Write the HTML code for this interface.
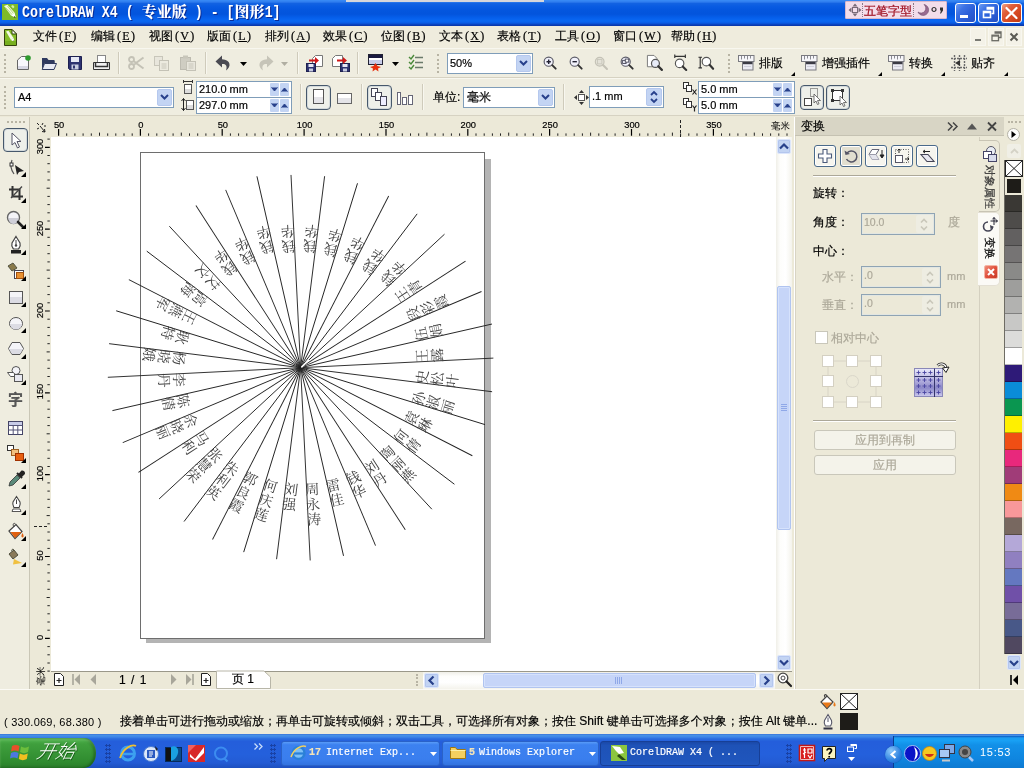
<!DOCTYPE html>
<html lang="zh-CN"><head><meta charset="utf-8"><title>CorelDRAW X4 ( 专业版 ) - [图形1]</title>
<style>
*{box-sizing:border-box;margin:0;padding:0}
html,body{width:1024px;height:768px;overflow:hidden;background:#ECE9D8}
body{font-family:"Liberation Sans","WenQuanYi Zen Hei","Noto Sans CJK SC",sans-serif;font-size:12px;color:#000;line-height:1;-webkit-text-stroke:0.18px currentColor}
#root{position:absolute;left:0;top:0;width:1024px;height:768px;overflow:hidden;background:#ECE9D8}
.a{position:absolute}
.t{position:absolute;white-space:nowrap;line-height:1}
u{text-decoration:underline}
svg{position:absolute;overflow:visible}
#titletext .lat{font-size:13.3px;letter-spacing:0;display:inline-block;white-space:pre;transform:scaleY(1.28);transform-origin:50% 78%;position:relative;top:2px}
#titletext .cj{font-size:15px;font-weight:900;position:relative;top:2px}
.mi{font-size:12px;font-family:"Liberation Serif","WenQuanYi Zen Hei","Noto Sans CJK SC",serif;letter-spacing:0}
.mi .mk{font-size:12px;letter-spacing:1.3px;margin-left:2px}
.grip{width:3px;border-left:2px dotted #B8B4A4}
.vsep{width:2px;border-left:1px solid #CFCBBB;border-right:1px solid #F8F7EF}
.combo{background:#fff;border:1px solid #7F9DB9}
.cbtn{background:#C3D4F3;border:1px solid #B5C8EE;border-radius:2px}
.tb{font-size:12px}
.sbtn{width:9px;height:13px;background:#C3D4F3;border-radius:1px}
.selb{border:1px solid #46586C;border-radius:4px;background:#EEF0EA;box-shadow:inset 0 0 0 1px #D4DADC}
.rl{font-size:9.3px;letter-spacing:0}
.scb{background:#C3D4F3;border:1px solid #DCE6FB;border-radius:2px;box-shadow:0 0 0 1px #B4C6EE inset}
.sct{background:#C6D5F8;border:1px solid #B0C4F0;border-radius:2px;box-shadow:inset 0 0 0 1px #D6E2FC}
#fan text{stroke:none;fill:#444;-webkit-text-stroke:0}
.dl{font-size:12px}
.vt{writing-mode:vertical-rl;text-orientation:sideways;letter-spacing:0}
.st{font-size:12px}
.st.num{font-size:11px}
.tk{font-size:12px;color:#fff;font-family:"Liberation Mono","Noto Sans CJK SC",monospace;font-size:10px;letter-spacing:0}
#fan{filter:grayscale(1)}
#root{filter:brightness(1)}

</style></head><body>
<div id="root">
<!-- sec_title -->
<div class="a" id="titlebar" style="left:0;top:0;width:1024px;height:26px;background:linear-gradient(to bottom,#3A8CF6 0px,#2E7CEE 2px,#1262E2 3.5px,#0A5CE2 6px,#0456DE 10px,#0354DC 14px,#0660EC 18px,#0A68F2 21px,#0A5CE4 23px,#0A44C0 24.5px,#0A34A4 26px)"></div>
<div class="a" style="left:346px;top:0;width:198px;height:2px;background:#D6D6DA"></div>
<svg style="left:2px;top:4px" width="16" height="16" viewBox="0 0 16 16"><rect x="0" y="0" width="16" height="16" fill="#7FBA2A"/><path d="M2 2 L5.500 0.800 L12.500 8.500 L9 11.500 Z" fill="#F4FAE4"/><path d="M3.500 3.500 L10 10.500 M5.500 2 L11.500 9.500" stroke="#A8D060" stroke-width="0.800"/><path d="M12.500 8.500 L9 11.500 L14 14Z" fill="#FFFFFF"/><path d="M12.300 12 L14.200 14.200 L11.800 13.200Z" fill="#1A2A08"/><path d="M9 2 l2 -1 l1.500 2 l-1.500 1.500z" fill="#D8F0A8"/></svg>
<div class="t" id="titletext" style="left:22px;top:4px;font-family:'Liberation Mono','Noto Serif CJK SC',monospace;font-weight:bold;font-size:15px;color:#fff;letter-spacing:0;text-shadow:1px 1px 0 #0A2C96;-webkit-text-stroke:0"><span class="lat">CorelDRAW X4 ( </span><span class="cj">专业版</span><span class="lat"> ) - [</span><span class="cj">图形</span><span class="lat">1]</span></div>
<div class="a" style="left:845px;top:1px;width:102px;height:18px;background:#F3DDEA;border:1px solid #D8B8CC;border-radius:1px"></div>
<svg style="left:848px;top:3px" width="14" height="14" viewBox="0 0 14 14"><path d="M7 0.5 L9.5 3.5 L4.5 3.5Z M7 13.5 L9.5 10.5 L4.5 10.5Z M0.5 7 L3.5 4.5 L3.5 9.5Z M13.5 7 L10.5 4.5 L10.5 9.5Z" fill="#7A6A78"/><rect x="4.5" y="4.5" width="5" height="5" fill="none" stroke="#7A6A78" stroke-width="1"/></svg>
<div class="a" style="left:862px;top:3px;width:1px;height:14px;border-left:1px dotted #8A7A88"></div>
<div class="t" style="left:864px;top:5px;font-size:12px;color:#A01020;letter-spacing:0;-webkit-text-stroke:0.25px #A01020">五笔字型</div>
<div class="a" style="left:913px;top:3px;width:1px;height:14px;border-left:1px dotted #8A7A88"></div>
<svg style="left:917px;top:4px" width="12" height="12" viewBox="0 0 12 12"><path d="M7 0.5 A5.5 5.5 0 1 1 1 8 A4.5 4.5 0 0 0 7 0.5Z" fill="#9A6A90" stroke="#6A4A68" stroke-width="0.6"/></svg>
<svg style="left:931px;top:6px" width="14" height="9" viewBox="0 0 14 9"><circle cx="3" cy="3.5" r="2" fill="none" stroke="#333" stroke-width="1.2"/><path d="M9 1.5 h3 v3 l-2 3 h-1 l1 -3 h-1z" fill="#333"/></svg>
<div class="a" style="left:955px;top:3px;width:21px;height:20px;border:1px solid #fff;border-radius:3px;background:linear-gradient(135deg,#6C9CF4 0%,#3C72E4 30%,#2B5FD8 60%,#2450C4 100%)"></div>
<div class="a" style="left:978px;top:3px;width:21px;height:20px;border:1px solid #fff;border-radius:3px;background:linear-gradient(135deg,#6C9CF4 0%,#3C72E4 30%,#2B5FD8 60%,#2450C4 100%)"></div>
<div class="a" style="left:1001px;top:3px;width:21px;height:20px;border:1px solid #fff;border-radius:3px;background:linear-gradient(135deg,#F0A488 0%,#E0603C 30%,#D84A22 60%,#C03A14 100%)"></div>
<div class="a" style="left:960px;top:15px;width:8px;height:3px;background:#fff"></div>
<svg style="left:982px;top:6px" width="13" height="13" viewBox="0 0 13 13"><path d="M4.5 1.5 h7 v6 h-2 M4.5 3 h7" fill="none" stroke="#fff" stroke-width="1.6"/><rect x="1.5" y="5.5" width="7" height="6" fill="none" stroke="#fff" stroke-width="1.6"/><path d="M1.5 6.5 h7" stroke="#fff" stroke-width="1.6"/></svg>
<svg style="left:1005px;top:7px" width="13" height="12" viewBox="0 0 13 12"><path d="M1.5 1 L11.5 11 M11.5 1 L1.5 11" stroke="#fff" stroke-width="2.2" stroke-linecap="round"/></svg>

<!-- sec_menu -->
<div class="a" id="menubar" style="left:0;top:26px;width:1024px;height:22px;background:#EFECDD"></div>
<svg style="left:4px;top:29px" width="13" height="17" viewBox="0 0 13 17"><path d="M0.500 0.500 H8 L12.500 5 V16.500 H0.500Z" fill="#86BE2A" stroke="#34440E" stroke-width="1"/><path d="M8 0.500 V5 H12.500Z" fill="#fff" stroke="#34440E" stroke-width="1"/><path d="M2 2.500 L4.500 1.800 L9.500 9 L7 11Z" fill="#F4FAE4"/><path d="M9.500 9 L7 11 L10.500 13Z" fill="#fff"/><path d="M9.300 11.300 L10.800 13.200 L8.800 12.500Z" fill="#1A2A08"/><path d="M1 12 h11 v4 h-11z" fill="#78B020"/></svg>
<div class="t mi" style="left:33px;top:30px">文件<span class="mk">(<u>F</u>)</span></div>
<div class="t mi" style="left:91px;top:30px">编辑<span class="mk">(<u>E</u>)</span></div>
<div class="t mi" style="left:149px;top:30px">视图<span class="mk">(<u>V</u>)</span></div>
<div class="t mi" style="left:207px;top:30px">版面<span class="mk">(<u>L</u>)</span></div>
<div class="t mi" style="left:265px;top:30px">排列<span class="mk">(<u>A</u>)</span></div>
<div class="t mi" style="left:323px;top:30px">效果<span class="mk">(<u>C</u>)</span></div>
<div class="t mi" style="left:381px;top:30px">位图<span class="mk">(<u>B</u>)</span></div>
<div class="t mi" style="left:439px;top:30px">文本<span class="mk">(<u>X</u>)</span></div>
<div class="t mi" style="left:497px;top:30px">表格<span class="mk">(<u>T</u>)</span></div>
<div class="t mi" style="left:555px;top:30px">工具<span class="mk">(<u>O</u>)</span></div>
<div class="t mi" style="left:613px;top:30px">窗口<span class="mk">(<u>W</u>)</span></div>
<div class="t mi" style="left:671px;top:30px">帮助<span class="mk">(<u>H</u>)</span></div>
<div class="a" style="left:970px;top:28px;width:16px;height:18px;background:#F4F2E8;border:1px solid #F8F7F0"></div>
<div class="a" style="left:988px;top:28px;width:16px;height:18px;background:#F4F2E8;border:1px solid #F8F7F0"></div>
<div class="a" style="left:1006px;top:28px;width:16px;height:18px;background:#F4F2E8;border:1px solid #F8F7F0"></div>
<div class="a" style="left:975px;top:39px;width:6px;height:2px;background:#7A7A74"></div>
<svg style="left:991px;top:31px" width="11" height="11" viewBox="0 0 11 11"><path d="M3.5 1 h6.5 v5.5 h-2 M3.5 2 h6.5" fill="none" stroke="#6A6A64" stroke-width="1.3"/><rect x="1" y="4.2" width="6.5" height="5.5" fill="none" stroke="#6A6A64" stroke-width="1.3"/><path d="M1 5 h6.5" stroke="#6A6A64" stroke-width="1.3"/></svg>
<svg style="left:1009px;top:32px" width="10" height="10" viewBox="0 0 10 10"><path d="M1.5 1.5 L8.5 8.5 M8.5 1.5 L1.5 8.5" stroke="#5A5A54" stroke-width="2"/></svg>

<!-- sec_toolbar -->
<div class="a" style="left:0;top:48px;width:1024px;height:30px;background:#EFEDE0;border-top:1px solid #F8F7EF;border-bottom:1px solid #D6D2C2"></div>
<div class="a grip" style="left:4px;top:54px;height:19px"></div>
<svg style="left:16px;top:55px" width="15" height="16" viewBox="0 0 15 16"><path d="M1.5 5 L5.5 1.5 H12.5 V14.5 H1.5Z" fill="#F8F8FC" stroke="#666"/><path d="M2 11 h10 v3 h-10z" fill="#D8D8E4"/><circle cx="12" cy="3" r="2.8" fill="#2E9A2E"/></svg>
<svg style="left:41px;top:55px" width="16" height="16" viewBox="0 0 16 16"><path d="M1 3 h5 l1.5 2 h6 v3 h-12.5z" fill="#2F3A5F"/><path d="M1 14.5 V6 h12.5 v2 H4Z" fill="#2F3A5F"/><path d="M3.5 8.5 H15.5 L13 14.5 H1.2Z" fill="#E8EAF4" stroke="#2F3A5F"/></svg>
<svg style="left:68px;top:56px" width="14" height="14" viewBox="0 0 14 14"><path d="M0.5 0.5 h13 v13 h-12 l-1 -1z" fill="#2D3270" stroke="#1D2050"/><rect x="3" y="1" width="8" height="5" fill="#E6E8F4"/><rect x="3.5" y="8.5" width="7" height="5" fill="#C8CCE0"/><rect x="5" y="9.5" width="2" height="3" fill="#2D3270"/></svg>
<svg style="left:93px;top:55px" width="17" height="16" viewBox="0 0 17 16"><rect x="4.5" y="0.5" width="8" height="8" fill="#fff" stroke="#888"/><path d="M0.5 7.5 h16 v7 h-16z" fill="#F0F0F0" stroke="#333"/><path d="M2.5 7.5 v4 h12 v-4" fill="none" stroke="#333" stroke-width="1.5"/></svg>
<div class="a vsep" style="left:118px;top:52px;height:22px"></div>
<svg style="left:128px;top:56px" width="17" height="14" viewBox="0 0 17 14"><path d="M8 7 L15.5 1.5 M8 7 L15.5 12.5" stroke="#C4C2B6" stroke-width="2"/><circle cx="3.5" cy="3.5" r="2.5" fill="none" stroke="#C4C2B6" stroke-width="1.8"/><circle cx="3.5" cy="10.5" r="2.5" fill="none" stroke="#C4C2B6" stroke-width="1.8"/><path d="M5.5 5 L9 7.5 M5.5 9 L9 6.5" stroke="#C4C2B6" stroke-width="1.8"/></svg>
<svg style="left:154px;top:56px" width="15" height="15" viewBox="0 0 15 15"><rect x="0.5" y="0.5" width="8" height="9" fill="#E8E6DC" stroke="#C8C6BA"/><rect x="5.5" y="4.5" width="9" height="10" fill="#ECEADF" stroke="#C4C2B6"/><path d="M7.5 8 h5 M7.5 10 h5 M7.5 12 h5" stroke="#C8C6BA"/></svg>
<svg style="left:180px;top:55px" width="16" height="16" viewBox="0 0 16 16"><rect x="0.5" y="2.5" width="10" height="12" fill="#CFCDC2" stroke="#BDBBB0"/><rect x="3" y="0.5" width="5" height="3" fill="#C8C6BA"/><rect x="6.5" y="6.5" width="9" height="9" fill="#E8E6DC" stroke="#C4C2B6"/><path d="M8.5 9 h5 M8.5 11 h5 M8.5 13 h5" stroke="#C8C6BA"/></svg>
<div class="a vsep" style="left:205px;top:52px;height:22px"></div>
<svg style="left:215px;top:55px" width="18" height="17" viewBox="0 0 18 17"><path d="M7 0.5 L0.5 6.5 L7 12.5 V9 C11 8.5 12.5 11 11 15.5 C16.5 12 16 4.5 7 4.2Z" fill="#4A4A52"/></svg>
<svg style="left:240px;top:62px" width="7" height="4" viewBox="0 0 7 4"><path d="M0 0 h7 l-3.5 4z" fill="#000"/></svg>
<svg style="left:256px;top:55px" width="18" height="17" viewBox="0 0 18 17"><path d="M11 0.5 L17.5 6.5 L11 12.5 V9 C7 8.5 5.5 11 7 15.5 C1.5 12 2 4.5 11 4.2Z" fill="#C6C4B8"/></svg>
<svg style="left:281px;top:62px" width="7" height="4" viewBox="0 0 7 4"><path d="M0 0 h7 l-3.5 4z" fill="#B0AEA2"/></svg>
<div class="a vsep" style="left:297px;top:52px;height:22px"></div>
<svg style="left:306px;top:55px" width="18" height="17" viewBox="0 0 18 17"><path d="M9.5 0.5 h7 v11 h-10 v-8z" fill="#fff" stroke="#777"/><rect x="0.5" y="8.5" width="9" height="8" fill="#2D3270" stroke="#1D2050"/><rect x="2.5" y="9" width="5" height="3" fill="#E6E8F4"/><rect x="3" y="13.5" width="4" height="3" fill="#C8CCE0"/><path d="M3 4.5 h6 v-2.5 l4 3.5 l-4 3.5 v-2.500 h-6z" fill="#D01818"/></svg>
<svg style="left:332px;top:55px" width="18" height="17" viewBox="0 0 18 17"><path d="M3.500 0.500 h7 v11 h-10 v-8z" fill="#fff" stroke="#777"/><rect x="8.500" y="8.500" width="9" height="8" fill="#2D3270" stroke="#1D2050"/><rect x="10.500" y="9" width="5" height="3" fill="#E6E8F4"/><rect x="11" y="13.500" width="4" height="3" fill="#C8CCE0"/><path d="M5 4.500 h6 v-2.500 l4 3.500 l-4 3.500 v-2.500 h-6z" fill="#D01818"/></svg>
<div class="a vsep" style="left:357px;top:52px;height:22px"></div>
<svg style="left:368px;top:54px" width="15" height="18" viewBox="0 0 15 18"><rect x="0.5" y="0.5" width="14" height="10" fill="#fff" stroke="#223"/><rect x="1" y="1" width="13" height="3" fill="#1A1A40"/><rect x="1" y="6" width="13" height="4" fill="#C8CCE8"/><path d="M7.5 9 l2 3 l3.500 1 l-3 1.500 l0.500 3 l-3 -2 l-3 2 l0.500 -3 l-3 -1.500 l3.500 -1z" fill="#E83010"/></svg>
<svg style="left:392px;top:62px" width="7" height="4" viewBox="0 0 7 4"><path d="M0 0 h7 l-3.5 4z" fill="#000"/></svg>
<svg style="left:408px;top:54px" width="16" height="18" viewBox="0 0 16 18"><path d="M7 3.5 h8 M7 8.500 h8 M7 13.500 h8" stroke="#6A7A6A" stroke-width="1.4"/><path d="M1 3 l2 2 l3 -4 M1 8 l2 2 l3 -4 M1 13 l2 2 l3 -4" fill="none" stroke="#4A8A3A" stroke-width="1.4"/></svg>
<div class="a grip" style="left:437px;top:54px;height:19px"></div>
<div class="a combo" style="left:447px;top:53px;width:86px;height:21px"></div>
<div class="a cbtn" style="left:516px;top:55px;width:15px;height:17px"></div>
<svg style="left:519px;top:60px" width="9" height="6" viewBox="0 0 9 6"><path d="M1 1 L4.5 4.5 L8 1" fill="none" stroke="#27408B" stroke-width="2"/></svg>
<div class="t" style="left:450px;top:58px;font-size:11px">50%</div>
<svg style="left:543px;top:56px" width="14" height="14" viewBox="0 0 16 16"><circle cx="6.5" cy="6.5" r="5.2" fill="#F0F0FA" stroke="#5A5A66" stroke-width="1.3"/><path d="M10.500 10.500 L14.500 14.500" stroke="#333" stroke-width="2.200" stroke-linecap="round"/><path d="M4 6.500 h5 M6.500 4 v5" stroke="#223" stroke-width="1.6"/></svg>
<svg style="left:569px;top:56px" width="14" height="14" viewBox="0 0 16 16"><circle cx="6.5" cy="6.5" r="5.2" fill="#F0F0FA" stroke="#5A5A66" stroke-width="1.3"/><path d="M10.500 10.500 L14.500 14.500" stroke="#333" stroke-width="2.200" stroke-linecap="round"/><path d="M4 6.500 h5" stroke="#223" stroke-width="1.6"/></svg>
<svg style="left:594px;top:56px" width="14" height="14" viewBox="0 0 16 16"><circle cx="6.500" cy="6.500" r="5" fill="#E4E2D8" stroke="#C4C2B6" stroke-width="1.300"/><path d="M10.300 10.300 L14.800 14.800" stroke="#C4C2B6" stroke-width="2.400" stroke-linecap="round"/><rect x="4" y="4" width="5" height="5" fill="none" stroke="#C8C6BA"/></svg>
<svg style="left:620px;top:56px" width="14" height="14" viewBox="0 0 16 16"><circle cx="6.5" cy="6.5" r="5.2" fill="#F0F0FA" stroke="#5A5A66" stroke-width="1.3"/><path d="M10.500 10.500 L14.500 14.500" stroke="#333" stroke-width="2.200" stroke-linecap="round"/><rect x="3" y="5" width="4" height="3.500" fill="none" stroke="#445"/><rect x="6" y="3.500" width="4" height="3.500" fill="#fff" stroke="#445"/></svg>
<svg style="left:646px;top:54px" width="17" height="17" viewBox="0 0 18 18"><path d="M1.500 1.500 h7 l3 3 v9 h-10z" fill="#fff" stroke="#777"/><circle cx="10" cy="10" r="4.200" fill="#E8ECF8" stroke="#555" stroke-width="1.300"/><path d="M13 13 L16.800 16.800" stroke="#333" stroke-width="2.400" stroke-linecap="round"/></svg>
<svg style="left:673px;top:54px" width="15" height="17" viewBox="0 0 17 19"><path d="M2 0.500 v4 M14 0.500 v4 M2 2.500 h12" stroke="#333" stroke-width="1.300"/><circle cx="7.500" cy="10.500" r="4.800" fill="#fff" stroke="#555" stroke-width="1.300"/><path d="M11 14 L15 18" stroke="#333" stroke-width="2.400" stroke-linecap="round"/></svg>
<svg style="left:698px;top:55px" width="16" height="16" viewBox="0 0 18 18"><path d="M0.500 2.500 h4 M0.500 14.500 h4 M2.500 2.500 v12" stroke="#333" stroke-width="1.300"/><circle cx="9.500" cy="7.500" r="4.800" fill="#fff" stroke="#555" stroke-width="1.300"/><path d="M13 11 L17 15.500" stroke="#333" stroke-width="2.400" stroke-linecap="round"/></svg>
<div class="a grip" style="left:728px;top:54px;height:19px"></div>
<svg style="left:738px;top:55px" width="17" height="16" viewBox="0 0 17 16"><rect x="0.5" y="0.5" width="15.5" height="6" fill="#F6F6FA" stroke="#7A7A80"/><path d="M3.500 1 v3.500 M6.500 1 v2.500 M9.500 1 v3.500 M12.500 1 v2.500" stroke="#8A8A92"/><rect x="4.500" y="6.500" width="10.500" height="8.500" fill="#ECECF4" stroke="#7A7A80"/><rect x="5" y="7" width="9.500" height="2.200" fill="#3A3A44"/><path d="M6 11.500 h7" stroke="#D0D0DC"/></svg>
<div class="t tb" style="left:759px;top:57px">排版</div>
<svg style="left:791px;top:72px" width="4" height="4" viewBox="0 0 4 4"><path d="M4 0 v4 h-4z" fill="#000"/></svg>
<svg style="left:801px;top:55px" width="17" height="16" viewBox="0 0 17 16"><rect x="0.5" y="0.5" width="15.5" height="6" fill="#F6F6FA" stroke="#7A7A80"/><path d="M3.500 1 v3.500 M6.500 1 v2.500 M9.500 1 v3.500 M12.500 1 v2.500" stroke="#8A8A92"/><rect x="4.500" y="6.500" width="10.500" height="8.500" fill="#ECECF4" stroke="#7A7A80"/><rect x="5" y="7" width="9.500" height="2.200" fill="#3A3A44"/><path d="M6 11.500 h7" stroke="#D0D0DC"/></svg>
<div class="t tb" style="left:822px;top:57px">增强插件</div>
<svg style="left:878px;top:72px" width="4" height="4" viewBox="0 0 4 4"><path d="M4 0 v4 h-4z" fill="#000"/></svg>
<svg style="left:888px;top:55px" width="17" height="16" viewBox="0 0 17 16"><rect x="0.5" y="0.5" width="15.5" height="6" fill="#F6F6FA" stroke="#7A7A80"/><path d="M3.500 1 v3.500 M6.500 1 v2.500 M9.500 1 v3.500 M12.500 1 v2.500" stroke="#8A8A92"/><rect x="4.500" y="6.500" width="10.500" height="8.500" fill="#ECECF4" stroke="#7A7A80"/><rect x="5" y="7" width="9.500" height="2.200" fill="#3A3A44"/><path d="M6 11.500 h7" stroke="#D0D0DC"/></svg>
<div class="t tb" style="left:909px;top:57px">转换</div>
<svg style="left:941px;top:72px" width="4" height="4" viewBox="0 0 4 4"><path d="M4 0 v4 h-4z" fill="#000"/></svg>
<svg style="left:951px;top:55px" width="16" height="16" viewBox="0 0 16 16"><path d="M3.500 0 v16 M8.500 0 v16 M13.500 0 v16 M0 3.500 h16 M0 12.500 h16" stroke="#6A6A6A" stroke-width="1.400" stroke-dasharray="2 1"/><path d="M4 8 l5 -3 v6z" fill="#333"/></svg>
<div class="t tb" style="left:971px;top:57px">贴齐</div>
<svg style="left:1004px;top:72px" width="4" height="4" viewBox="0 0 4 4"><path d="M4 0 v4 h-4z" fill="#000"/></svg>

<!-- sec_propbar -->
<div class="a" style="left:0;top:78px;width:1024px;height:38px;background:#EFEDE0;border-top:1px solid #F8F7EF;border-bottom:1px solid #D6D2C2"></div>
<div class="a grip" style="left:4px;top:86px;height:23px"></div>
<div class="a combo" style="left:14px;top:87px;width:160px;height:21px"></div>
<div class="a cbtn" style="left:157px;top:89px;width:15px;height:17px"></div>
<svg style="left:160px;top:94px" width="9" height="6" viewBox="0 0 9 6"><path d="M1 1 L4.5 4.5 L8 1" fill="none" stroke="#27408B" stroke-width="2"/></svg>
<div class="t" style="left:18px;top:92px;font-size:11px">A4</div>
<svg style="left:183px;top:80px" width="10" height="15" viewBox="0 0 10 15"><path d="M0.500 1.500 h9 M0.500 0 v3 M9.500 0 v3" stroke="#333"/><rect x="1.500" y="4.500" width="7" height="9" fill="#fff" stroke="#555"/><rect x="2" y="9" width="6" height="4" fill="#DDD"/></svg>
<svg style="left:181px;top:98px" width="13" height="14" viewBox="0 0 13 14"><path d="M2.500 0.500 v12 M0.500 3 l2 -2.500 l2 2.500 M0.500 10 l2 2.500 l2 -2.500" fill="none" stroke="#222"/><rect x="5.500" y="2.500" width="7" height="9" fill="#fff" stroke="#555"/><rect x="6" y="7" width="6" height="4" fill="#DDD"/></svg>
<div class="a combo" style="left:196px;top:81px;width:96px;height:17px"></div>
<div class="t" style="left:199px;top:84px;font-size:11px">210.0 mm</div>
<div class="a sbtn" style="left:270px;top:83px"></div><div class="a sbtn" style="left:280px;top:83px"></div>
<svg style="left:271px;top:87px" width="7" height="5" viewBox="0 0 7 5"><path d="M0.5 0.5 L3.5 4 L6.5 0.5" fill="#27408B" stroke="#27408B" stroke-width="1"/></svg>
<svg style="left:281px;top:87px" width="7" height="5" viewBox="0 0 7 5"><path d="M0.5 4.500 L3.500 1 L6.500 4.500" fill="#27408B" stroke="#27408B" stroke-width="1"/></svg>
<div class="a combo" style="left:196px;top:97px;width:96px;height:17px"></div>
<div class="t" style="left:199px;top:100px;font-size:11px">297.0 mm</div>
<div class="a sbtn" style="left:270px;top:99px"></div><div class="a sbtn" style="left:280px;top:99px"></div>
<svg style="left:271px;top:103px" width="7" height="5" viewBox="0 0 7 5"><path d="M0.5 0.5 L3.5 4 L6.5 0.5" fill="#27408B" stroke="#27408B" stroke-width="1"/></svg>
<svg style="left:281px;top:103px" width="7" height="5" viewBox="0 0 7 5"><path d="M0.5 4.500 L3.500 1 L6.500 4.500" fill="#27408B" stroke="#27408B" stroke-width="1"/></svg>
<div class="a vsep" style="left:300px;top:84px;height:26px"></div>
<div class="a selb" style="left:306px;top:85px;width:25px;height:25px"></div>
<svg style="left:313px;top:89px" width="11" height="15" viewBox="0 0 11 15"><rect x="0.500" y="0.500" width="10" height="14" fill="#fff" stroke="#555"/><rect x="1" y="8" width="9" height="6" fill="#E4E4E8"/></svg>
<svg style="left:337px;top:93px" width="15" height="11" viewBox="0 0 15 11"><rect x="0.500" y="0.500" width="14" height="10" fill="#fff" stroke="#666"/><rect x="1" y="5" width="13" height="5" fill="#E4E4E8"/></svg>
<div class="a vsep" style="left:361px;top:84px;height:26px"></div>
<div class="a selb" style="left:367px;top:85px;width:25px;height:25px"></div>
<svg style="left:371px;top:88px" width="17" height="19" viewBox="0 0 17 19"><rect x="0.500" y="0.500" width="6" height="8" fill="#fff" stroke="#445"/><rect x="4.500" y="4.500" width="6" height="8" fill="#fff" stroke="#445"/><rect x="9.500" y="8.500" width="6" height="9" fill="#EEF" stroke="#445"/></svg>
<svg style="left:397px;top:92px" width="17" height="13" viewBox="0 0 17 13"><rect x="0.500" y="0.500" width="3" height="12" fill="#fff" stroke="#667"/><rect x="5.500" y="5.500" width="4" height="7" fill="#fff" stroke="#667"/><rect x="11.500" y="3.500" width="4" height="9" fill="#fff" stroke="#667"/></svg>
<div class="a vsep" style="left:422px;top:84px;height:26px"></div>
<div class="t" style="left:433px;top:91px;font-size:12px">单位:</div>
<div class="a combo" style="left:463px;top:87px;width:92px;height:21px"></div>
<div class="a cbtn" style="left:538px;top:89px;width:15px;height:17px"></div>
<svg style="left:541px;top:94px" width="9" height="6" viewBox="0 0 9 6"><path d="M1 1 L4.5 4.5 L8 1" fill="none" stroke="#27408B" stroke-width="2"/></svg>
<div class="t" style="left:467px;top:91px;font-size:12px">毫米</div>
<div class="a vsep" style="left:563px;top:84px;height:26px"></div>
<svg style="left:574px;top:90px" width="15" height="15" viewBox="0 0 15 15"><path d="M7.500 0 L10 3 H5Z M7.500 15 L10 12 H5Z M0 7.500 L3 5 V10Z M15 7.500 L12 5 V10Z" fill="#333"/><rect x="4.500" y="4.500" width="6" height="6" fill="#fff" stroke="#555"/></svg>
<div class="a combo" style="left:589px;top:86px;width:75px;height:22px"></div>
<div class="t" style="left:592px;top:91px;font-size:11px">.1 mm</div>
<div class="a cbtn" style="left:646px;top:88px;width:16px;height:18px"></div>
<svg style="left:650px;top:90px" width="8" height="14" viewBox="0 0 8 14"><path d="M1 5 L4 2 L7 5" fill="none" stroke="#27408B" stroke-width="1.800"/><path d="M1 9 L4 12 L7 9" fill="none" stroke="#27408B" stroke-width="1.800"/></svg>
<svg style="left:683px;top:82px" width="15" height="13" viewBox="0 0 15 13"><rect x="0.500" y="0.500" width="5" height="6" fill="#fff" stroke="#333"/><rect x="3.500" y="3.500" width="5" height="6" fill="#fff" stroke="#333"/><path d="M9.500 7.500 l4 5 M13.500 7.500 l-4 5" stroke="#222" stroke-width="1.200"/></svg>
<svg style="left:683px;top:98px" width="15" height="14" viewBox="0 0 15 14"><rect x="0.500" y="0.500" width="5" height="6" fill="#fff" stroke="#333"/><rect x="3.500" y="3.500" width="5" height="6" fill="#fff" stroke="#333"/><path d="M9.500 7.500 l2 2.500 l2 -2.500 M11.500 10 v3.500" fill="none" stroke="#222" stroke-width="1.200"/></svg>
<div class="a combo" style="left:698px;top:81px;width:97px;height:17px"></div>
<div class="t" style="left:701px;top:84px;font-size:11px">5.0 mm</div>
<div class="a sbtn" style="left:773px;top:83px"></div><div class="a sbtn" style="left:783px;top:83px"></div>
<svg style="left:774px;top:87px" width="7" height="5" viewBox="0 0 7 5"><path d="M0.5 0.5 L3.5 4 L6.5 0.5" fill="#27408B" stroke="#27408B" stroke-width="1"/></svg>
<svg style="left:784px;top:87px" width="7" height="5" viewBox="0 0 7 5"><path d="M0.5 4.500 L3.500 1 L6.500 4.500" fill="#27408B" stroke="#27408B" stroke-width="1"/></svg>
<div class="a combo" style="left:698px;top:97px;width:97px;height:17px"></div>
<div class="t" style="left:701px;top:100px;font-size:11px">5.0 mm</div>
<div class="a sbtn" style="left:773px;top:99px"></div><div class="a sbtn" style="left:783px;top:99px"></div>
<svg style="left:774px;top:103px" width="7" height="5" viewBox="0 0 7 5"><path d="M0.5 0.5 L3.5 4 L6.5 0.5" fill="#27408B" stroke="#27408B" stroke-width="1"/></svg>
<svg style="left:784px;top:103px" width="7" height="5" viewBox="0 0 7 5"><path d="M0.5 4.500 L3.500 1 L6.500 4.500" fill="#27408B" stroke="#27408B" stroke-width="1"/></svg>
<div class="a selb" style="left:800px;top:85px;width:24px;height:25px"></div>
<svg style="left:804px;top:88px" width="17" height="19" viewBox="0 0 17 19"><rect x="6.500" y="0.500" width="7" height="8" fill="none" stroke="#444" stroke-dasharray="1 1"/><rect x="0.500" y="10.500" width="7" height="7" fill="#fff" stroke="#444"/><path d="M10 6 v9 l2 -2 l1.500 3.500 l1.500 -0.700 l-1.500 -3.300 h3z" fill="#fff" stroke="#555" stroke-width="0.800"/></svg>
<div class="a selb" style="left:826px;top:85px;width:24px;height:25px"></div>
<svg style="left:830px;top:88px" width="18" height="20" viewBox="0 0 18 20"><rect x="2.500" y="2.500" width="10" height="10" fill="#fff" stroke="#333"/><rect x="1" y="1" width="3" height="3" fill="#333"/><rect x="11" y="1" width="3" height="3" fill="#333"/><rect x="1" y="11" width="3" height="3" fill="#333"/><rect x="11" y="11" width="3" height="3" fill="#333"/><path d="M10 8 v9 l2 -2 l1.500 3.500 l1.500 -0.700 l-1.500 -3.300 h3z" fill="#fff" stroke="#555" stroke-width="0.800"/></svg>

<!-- sec_toolbox -->
<div class="a" style="left:0;top:117px;width:30px;height:574px;background:#EFEDE0;border-right:1px solid #C9C6B6"></div>
<div class="a" style="left:7px;top:121px;width:18px;height:2px;border-top:2px dotted #B8B4A4"></div>
<div class="a selb" style="left:3px;top:128px;width:25px;height:24px"></div>
<svg style="left:11px;top:132px" width="11" height="17" viewBox="0 0 11 17"><path d="M1 1 V13 L4 10.500 L6.500 16 L8.500 15 L6 9.500 H10Z" fill="#fff" stroke="#556" stroke-width="1"/></svg>
<svg style="left:8px;top:158px" width="18" height="18" viewBox="0 0 18 18"><path d="M4 2 C 2 7 3 12 6 16" fill="none" stroke="#555" stroke-width="1.200"/><rect x="2" y="5" width="3" height="3" fill="#fff" stroke="#333"/><path d="M7 7 L16 13 L11 14 L9 17Z" fill="#222"/></svg>
<svg style="left:21px;top:172px" width="5" height="5" viewBox="0 0 5 5"><path d="M5 0 v5 h-5z" fill="#000"/></svg>
<svg style="left:9px;top:186px" width="14" height="14" viewBox="0 0 14 14"><path d="M3.500 0 V10.500 H14 M0 3.500 H10.500 V14" fill="none" stroke="#333" stroke-width="2"/><path d="M13 0.500 L2 12" stroke="#444" stroke-width="1.300"/></svg>
<svg style="left:21px;top:198px" width="5" height="5" viewBox="0 0 5 5"><path d="M5 0 v5 h-5z" fill="#000"/></svg>
<svg style="left:6px;top:210px" width="20" height="19" viewBox="0 0 20 19"><circle cx="7.500" cy="7.500" r="6" fill="#F4F4F8" stroke="#666" stroke-width="1.400"/><path d="M3 8 h9 v1.500 a4.500 4.500 0 0 1 -9 0z" fill="#CFCFD8"/><path d="M12 12 L17 17" stroke="#222" stroke-width="2.600" stroke-linecap="round"/></svg>
<svg style="left:21px;top:224px" width="5" height="5" viewBox="0 0 5 5"><path d="M5 0 v5 h-5z" fill="#000"/></svg>
<svg style="left:9px;top:236px" width="14" height="18" viewBox="0 0 14 18"><path d="M7 0.500 L11 7 C12 10 10 12 9.500 13 H4.500 C4 12 2 10 3 7Z" fill="#fff" stroke="#444" stroke-width="1.200"/><path d="M7 4 V9" stroke="#444"/><circle cx="7" cy="9.500" r="1.200" fill="#444"/><rect x="2" y="14" width="10" height="3.500" fill="#222"/></svg>
<svg style="left:21px;top:250px" width="5" height="5" viewBox="0 0 5 5"><path d="M5 0 v5 h-5z" fill="#000"/></svg>
<svg style="left:7px;top:262px" width="19" height="19" viewBox="0 0 19 19"><path d="M1 4 l5 -3 l4 5 l-5 3z" fill="#8A7A4A" stroke="#554"/><rect x="7.500" y="8.500" width="9" height="8" fill="#fff" stroke="#445"/><rect x="9.500" y="10.500" width="7" height="6" fill="#E89030" stroke="#A05010"/></svg>
<svg style="left:21px;top:276px" width="5" height="5" viewBox="0 0 5 5"><path d="M5 0 v5 h-5z" fill="#000"/></svg>
<svg style="left:9px;top:291px" width="14" height="13" viewBox="0 0 14 13"><rect x="0.500" y="0.500" width="13" height="12" fill="#F4F4F8" stroke="#555"/><rect x="1" y="6" width="12" height="6" fill="#DCDCE4"/></svg>
<svg style="left:21px;top:302px" width="5" height="5" viewBox="0 0 5 5"><path d="M5 0 v5 h-5z" fill="#000"/></svg>
<svg style="left:9px;top:317px" width="14" height="13" viewBox="0 0 14 13"><ellipse cx="7" cy="6.500" rx="6.500" ry="6" fill="#F4F4F8" stroke="#555"/><path d="M1 7 h12 a6 5.500 0 0 1 -12 0z" fill="#DCDCE4"/></svg>
<svg style="left:21px;top:328px" width="5" height="5" viewBox="0 0 5 5"><path d="M5 0 v5 h-5z" fill="#000"/></svg>
<svg style="left:8px;top:342px" width="16" height="13" viewBox="0 0 16 13"><path d="M4 0.500 H12 L15.500 6.500 L12 12.500 H4 L0.500 6.500Z" fill="#F4F4F8" stroke="#555"/><path d="M1 7 H15 L12 12 H4Z" fill="#DCDCE4"/></svg>
<svg style="left:21px;top:354px" width="5" height="5" viewBox="0 0 5 5"><path d="M5 0 v5 h-5z" fill="#000"/></svg>
<svg style="left:7px;top:366px" width="18" height="17" viewBox="0 0 18 17"><circle cx="9" cy="4.500" r="4" fill="#F4F4F8" stroke="#555"/><path d="M0.500 6.500 h6 l3 4 h-6z" fill="#fff" stroke="#555"/><rect x="7.500" y="8.500" width="8" height="7" fill="#E8E8F0" stroke="#555"/></svg>
<svg style="left:21px;top:380px" width="5" height="5" viewBox="0 0 5 5"><path d="M5 0 v5 h-5z" fill="#000"/></svg>
<div class="t" style="left:8px;top:392px;font-size:15px;font-weight:bold;color:#555;font-family:'Liberation Sans','Noto Sans CJK SC',sans-serif">字</div>
<svg style="left:8px;top:421px" width="15" height="14" viewBox="0 0 15 14"><rect x="0.500" y="0.500" width="14" height="13" fill="#fff" stroke="#446"/><path d="M0.500 4.500 h14 M0.500 9 h14 M5.200 0.500 v13 M9.800 0.500 v13" stroke="#557" stroke-width="1"/><rect x="1" y="1" width="13" height="3" fill="#C8CCE8"/></svg>
<svg style="left:7px;top:445px" width="18" height="16" viewBox="0 0 18 16"><rect x="0.500" y="0.500" width="6" height="5" fill="#fff" stroke="#333"/><rect x="4.500" y="4.500" width="7" height="6" fill="#F0C080" stroke="#A06020"/><rect x="8.500" y="8.500" width="8" height="7" fill="#E86010" stroke="#A03000"/></svg>
<svg style="left:21px;top:458px" width="5" height="5" viewBox="0 0 5 5"><path d="M5 0 v5 h-5z" fill="#000"/></svg>
<svg style="left:8px;top:470px" width="17" height="17" viewBox="0 0 17 17"><path d="M1 16 L2 12 L9 5 L12 8 L5 15Z" fill="#5A8A7A" stroke="#333" stroke-width="0.800"/><path d="M9 3 L14 8 M10.500 5.500 L14 1.500 a1.800 1.800 0 0 1 2 2 L12.500 7" fill="#222" stroke="#222" stroke-width="2"/></svg>
<svg style="left:21px;top:484px" width="5" height="5" viewBox="0 0 5 5"><path d="M5 0 v5 h-5z" fill="#000"/></svg>
<svg style="left:10px;top:496px" width="13" height="16" viewBox="0 0 13 16"><path d="M6.500 0.500 L10 6 C11 9 9.500 10.500 9 11.500 H4 C3.500 10.500 2 9 3 6Z" fill="#fff" stroke="#444" stroke-width="1.100"/><path d="M6.500 3.500 V8" stroke="#444"/><path d="M3 13 h7 l1 2.500 h-9z" fill="#fff" stroke="#444" stroke-width="0.900"/></svg>
<svg style="left:21px;top:510px" width="5" height="5" viewBox="0 0 5 5"><path d="M5 0 v5 h-5z" fill="#000"/></svg>
<svg style="left:6px;top:523px" width="19" height="17" viewBox="0 0 19 17"><path d="M3 8 L10 1.500 L16 8.500 L9 15.500Z" fill="#fff" stroke="#444" stroke-width="1.200"/><path d="M4.500 9 H15.500 L9 15Z" fill="#E06010"/><path d="M10 1.500 C 8 -1 6 1 8 4" fill="none" stroke="#444"/><path d="M16.500 10 c1.500 2.500 1.500 4 0 4.500 c-1.500 -0.500 -1.500 -2 0 -4.500z" fill="#E06010"/></svg>
<svg style="left:21px;top:536px" width="5" height="5" viewBox="0 0 5 5"><path d="M5 0 v5 h-5z" fill="#000"/></svg>
<svg style="left:7px;top:549px" width="18" height="16" viewBox="0 0 18 16"><path d="M2 5 L7 1 L11 6 L6 10Z" fill="#8A7A5A" stroke="#443" stroke-width="0.900"/><path d="M7 1 C6 -0.500 4 0.500 5 2.500" fill="none" stroke="#443"/><path d="M7 10 l8 4 l-9 1.500z" fill="#F0C040"/></svg>
<svg style="left:21px;top:562px" width="5" height="5" viewBox="0 0 5 5"><path d="M5 0 v5 h-5z" fill="#000"/></svg>

<!-- sec_canvas -->
<div class="a" id="hruler" style="left:30px;top:117px;width:762px;height:20px;background:#ECE9D8"></div>
<div class="a" id="vruler" style="left:30px;top:137px;width:21px;height:552px;background:#ECE9D8"></div>
<div class="a" id="canvas" style="left:51px;top:137px;width:725px;height:534px;background:#fff"></div>
<svg style="left:0;top:0" width="1024" height="768" viewBox="0 0 1024 768"><path d="M66.7 133.4V135.8M74.9 133.4V135.8M83.1 133.4V135.8M91.3 133.4V135.8M99.5 132.6V135.8M107.7 133.4V135.8M115.8 133.4V135.8M124.0 133.4V135.8M132.2 133.4V135.8M148.6 133.4V135.8M156.8 133.4V135.8M165.0 133.4V135.8M173.1 133.4V135.8M181.3 132.6V135.8M189.5 133.4V135.8M197.7 133.4V135.8M205.9 133.4V135.8M214.1 133.4V135.8M230.4 133.4V135.8M238.6 133.4V135.8M246.8 133.4V135.8M255.0 133.4V135.8M263.2 132.6V135.8M271.4 133.4V135.8M279.5 133.4V135.8M287.7 133.4V135.8M295.9 133.4V135.8M312.3 133.4V135.8M320.5 133.4V135.8M328.7 133.4V135.8M336.8 133.4V135.8M345.0 132.6V135.8M353.2 133.4V135.8M361.4 133.4V135.8M369.6 133.4V135.8M377.8 133.4V135.8M394.1 133.4V135.8M402.3 133.4V135.8M410.5 133.4V135.8M418.7 133.4V135.8M426.9 132.6V135.8M435.1 133.4V135.8M443.2 133.4V135.8M451.4 133.4V135.8M459.6 133.4V135.8M476.0 133.4V135.8M484.2 133.4V135.8M492.4 133.4V135.8M500.5 133.4V135.8M508.7 132.6V135.8M516.9 133.4V135.8M525.1 133.4V135.8M533.3 133.4V135.8M541.5 133.4V135.8M557.8 133.4V135.8M566.0 133.4V135.8M574.2 133.4V135.8M582.4 133.4V135.8M590.6 132.6V135.8M598.8 133.4V135.8M606.9 133.4V135.8M615.1 133.4V135.8M623.3 133.4V135.8M639.7 133.4V135.8M647.9 133.4V135.8M656.1 133.4V135.8M664.2 133.4V135.8M672.4 132.6V135.8M680.6 133.4V135.8M688.8 133.4V135.8M697.0 133.4V135.8M705.2 133.4V135.8M721.5 133.4V135.8M729.7 133.4V135.8M737.9 133.4V135.8M746.1 133.4V135.8M754.3 132.6V135.8M762.5 133.4V135.8M770.6 133.4V135.8M778.8 133.4V135.8M787.0 133.4V135.8M47.4 671.1H49.8M47.4 663.0H49.8M47.4 654.8H49.8M47.4 646.6H49.8M47.4 630.2H49.8M47.4 622.0H49.8M47.4 613.8H49.8M47.4 605.7H49.8M46.6 597.5H49.8M47.4 589.3H49.8M47.4 581.1H49.8M47.4 572.9H49.8M47.4 564.7H49.8M47.4 548.4H49.8M47.4 540.2H49.8M47.4 532.0H49.8M47.4 523.8H49.8M46.6 515.6H49.8M47.4 507.4H49.8M47.4 499.3H49.8M47.4 491.1H49.8M47.4 482.9H49.8M47.4 466.5H49.8M47.4 458.3H49.8M47.4 450.1H49.8M47.4 442.0H49.8M46.6 433.8H49.8M47.4 425.6H49.8M47.4 417.4H49.8M47.4 409.2H49.8M47.4 401.0H49.8M47.4 384.7H49.8M47.4 376.5H49.8M47.4 368.3H49.8M47.4 360.1H49.8M46.6 351.9H49.8M47.4 343.7H49.8M47.4 335.6H49.8M47.4 327.4H49.8M47.4 319.2H49.8M47.4 302.8H49.8M47.4 294.6H49.8M47.4 286.4H49.8M47.4 278.3H49.8M46.6 270.1H49.8M47.4 261.9H49.8M47.4 253.7H49.8M47.4 245.5H49.8M47.4 237.3H49.8M47.4 221.0H49.8M47.4 212.8H49.8M47.4 204.6H49.8M47.4 196.4H49.8M46.6 188.2H49.8M47.4 180.0H49.8M47.4 171.9H49.8M47.4 163.7H49.8M47.4 155.5H49.8M47.4 139.1H49.8" stroke="#222" stroke-width="1"/><path d="M58.6 129V135.8M140.4 129V135.8M222.2 129V135.8M304.1 129V135.8M386.0 129V135.8M467.8 129V135.8M549.6 129V135.8M631.5 129V135.8M713.4 129V135.8M45 638.4H49.8M45 556.5H49.8M45 474.7H49.8M45 392.8H49.8M45 311.0H49.8M45 229.1H49.8M45 147.3H49.8" stroke="#000" stroke-width="1.2"/><path d="M680.5 120V137" stroke="#222" stroke-width="1" stroke-dasharray="3 2"/><path d="M34 526.5H48" stroke="#222" stroke-width="1" stroke-dasharray="3 2"/><path d="M37 123l2 2M43 123l-1 2M46 126l-2 0M37 129l2-1M40 126l5 6M45 132l-3-0.500M45 132l-0.500-3" stroke="#222" stroke-width="1" fill="none"/></svg>
<div class="t rl" style="left:59.1px;top:120.7px;width:30px;margin-left:-15px;text-align:center">50</div>
<div class="t rl" style="left:140.9px;top:120.7px;width:30px;margin-left:-15px;text-align:center">0</div>
<div class="t rl" style="left:222.8px;top:120.7px;width:30px;margin-left:-15px;text-align:center">50</div>
<div class="t rl" style="left:304.6px;top:120.7px;width:30px;margin-left:-15px;text-align:center">100</div>
<div class="t rl" style="left:386.5px;top:120.7px;width:30px;margin-left:-15px;text-align:center">150</div>
<div class="t rl" style="left:468.3px;top:120.7px;width:30px;margin-left:-15px;text-align:center">200</div>
<div class="t rl" style="left:550.1px;top:120.7px;width:30px;margin-left:-15px;text-align:center">250</div>
<div class="t rl" style="left:632.0px;top:120.7px;width:30px;margin-left:-15px;text-align:center">300</div>
<div class="t rl" style="left:713.9px;top:120.7px;width:30px;margin-left:-15px;text-align:center">350</div>
<div class="t" style="left:771px;top:121px;font-size:9.5px;-webkit-text-stroke:0">毫米</div>
<div class="t rl" style="left:26px;top:140.8px;width:30px;height:11px;text-align:center;transform:rotate(-90deg);transform-origin:15px 5.5px">300</div>
<div class="t rl" style="left:26px;top:222.6px;width:30px;height:11px;text-align:center;transform:rotate(-90deg);transform-origin:15px 5.5px">250</div>
<div class="t rl" style="left:26px;top:304.5px;width:30px;height:11px;text-align:center;transform:rotate(-90deg);transform-origin:15px 5.5px">200</div>
<div class="t rl" style="left:26px;top:386.3px;width:30px;height:11px;text-align:center;transform:rotate(-90deg);transform-origin:15px 5.5px">150</div>
<div class="t rl" style="left:26px;top:468.2px;width:30px;height:11px;text-align:center;transform:rotate(-90deg);transform-origin:15px 5.5px">100</div>
<div class="t rl" style="left:26px;top:550.0px;width:30px;height:11px;text-align:center;transform:rotate(-90deg);transform-origin:15px 5.5px">50</div>
<div class="t rl" style="left:26px;top:631.9px;width:30px;height:11px;text-align:center;transform:rotate(-90deg);transform-origin:15px 5.5px">0</div>
<div class="t" style="left:31px;top:671px;font-size:9.5px;width:20px;height:10px;text-align:center;-webkit-text-stroke:0;transform:rotate(-90deg);transform-origin:10px 5px">毫米</div>
<div class="a" style="left:146px;top:159px;width:345px;height:484px;background:#B4B4B4"></div>
<div class="a" style="left:140px;top:152px;width:345px;height:487px;background:#fff;border:1px solid #6E6E6E"></div>
<svg id="fan" style="left:0;top:0" width="1024" height="768" viewBox="0 0 1024 768"><g transform="translate(300.6 367.7)" stroke="#222" stroke-width="0.9" fill="none" font-family="'Liberation Serif','Noto Serif CJK SC',serif" font-size="14.2" font-weight="400" text-anchor="middle">
<g transform="rotate(-2.85)"><path d="M0 0V193.0"/><text x="5.8" y="127.1"><tspan x="5.8" dy="0">周</tspan><tspan x="5.8" dy="15.1">永</tspan><tspan x="5.8" dy="15.1">涛</tspan></text></g>
<g transform="rotate(7.15)"><path d="M0 0V193.0"/><text x="5.8" y="127.1"><tspan x="5.8" dy="0">刘</tspan><tspan x="5.8" dy="15.1">强</tspan></text></g>
<g transform="rotate(17.15)"><path d="M0 0V193.0"/><text x="5.8" y="127.1"><tspan x="5.8" dy="0">何</tspan><tspan x="5.8" dy="15.1">庆</tspan><tspan x="5.8" dy="15.1">莲</tspan></text></g>
<g transform="rotate(27.15)"><path d="M0 0V193.0"/><text x="5.8" y="127.1"><tspan x="5.8" dy="0">郭</tspan><tspan x="5.8" dy="15.1">良</tspan><tspan x="5.8" dy="15.1">霞</tspan></text></g>
<g transform="rotate(37.15)"><path d="M0 0V193.0"/><text x="5.8" y="127.1"><tspan x="5.8" dy="0">朱</tspan><tspan x="5.8" dy="15.1">利</tspan><tspan x="5.8" dy="15.1">英</tspan></text></g>
<g transform="rotate(47.15)"><path d="M0 0V193.0"/><text x="5.8" y="127.1"><tspan x="5.8" dy="0">张</tspan><tspan x="5.8" dy="15.1">慧</tspan><tspan x="5.8" dy="15.1">荣</tspan></text></g>
<g transform="rotate(57.15)"><path d="M0 0V193.0"/><text x="5.8" y="127.1"><tspan x="5.8" dy="0">马</tspan><tspan x="5.8" dy="15.1">利</tspan></text></g>
<g transform="rotate(67.15)"><path d="M0 0V193.0"/><text x="5.8" y="127.1"><tspan x="5.8" dy="0">余</tspan><tspan x="5.8" dy="15.1">晓</tspan><tspan x="5.8" dy="15.1">丽</tspan></text></g>
<g transform="rotate(77.15)"><path d="M0 0V193.0"/><text x="5.8" y="127.1"><tspan x="5.8" dy="0">陈</tspan><tspan x="5.8" dy="15.1">倩</tspan></text></g>
<g transform="rotate(87.15)"><path d="M0 0V193.0"/><text x="5.8" y="127.1"><tspan x="5.8" dy="0">李</tspan><tspan x="5.8" dy="15.1">丹</tspan></text></g>
<g transform="rotate(97.15)"><path d="M0 0V193.0"/><text x="5.8" y="127.1"><tspan x="5.8" dy="0">杨</tspan><tspan x="5.8" dy="15.1">晓</tspan><tspan x="5.8" dy="15.1">娥</tspan></text></g>
<g transform="rotate(107.15)"><path d="M0 0V193.0"/><text x="5.8" y="127.1"><tspan x="5.8" dy="0">耿</tspan><tspan x="5.8" dy="15.1">特</tspan></text></g>
<g transform="rotate(117.15)"><path d="M0 0V193.0"/><text x="5.8" y="127.1"><tspan x="5.8" dy="0">王</tspan><tspan x="5.8" dy="15.1">燕</tspan><tspan x="5.8" dy="15.1">军</tspan></text></g>
<g transform="rotate(127.15)"><path d="M0 0V193.0"/><text x="5.8" y="127.1"><tspan x="5.8" dy="0">高</tspan><tspan x="5.8" dy="15.1">海</tspan></text></g>
<g transform="rotate(137.15)"><path d="M0 0V193.0"/><text x="5.8" y="127.1"><tspan x="5.8" dy="0">艾</tspan><tspan x="5.8" dy="15.1">文</tspan></text></g>
<g transform="rotate(147.15)"><path d="M0 0V193.0"/><text x="5.8" y="127.1"><tspan x="5.8" dy="0">钱</tspan><tspan x="5.8" dy="15.1">华</tspan></text></g>
<g transform="rotate(157.15)"><path d="M0 0V193.0"/><text x="5.8" y="127.1"><tspan x="5.8" dy="0">钱</tspan><tspan x="5.8" dy="15.1">华</tspan></text></g>
<g transform="rotate(167.15)"><path d="M0 0V196.3"/><text x="5.8" y="130.4"><tspan x="5.8" dy="0">钱</tspan><tspan x="5.8" dy="15.1">华</tspan></text></g>
<g transform="rotate(177.15)"><path d="M0 0V193.0"/><text x="5.8" y="127.1"><tspan x="5.8" dy="0">钱</tspan><tspan x="5.8" dy="15.1">华</tspan></text></g>
<g transform="rotate(187.15)"><path d="M0 0V193.0"/><text x="5.8" y="127.1"><tspan x="5.8" dy="0">钱</tspan><tspan x="5.8" dy="15.1">华</tspan></text></g>
<g transform="rotate(197.15)"><path d="M0 0V193.0"/><text x="5.8" y="127.1"><tspan x="5.8" dy="0">钱</tspan><tspan x="5.8" dy="15.1">华</tspan></text></g>
<g transform="rotate(207.15)"><path d="M0 0V193.0"/><text x="5.8" y="127.1"><tspan x="5.8" dy="0">钱</tspan><tspan x="5.8" dy="15.1">华</tspan></text></g>
<g transform="rotate(217.15)"><path d="M0 0V193.0"/><text x="5.8" y="127.1"><tspan x="5.8" dy="0">钱</tspan><tspan x="5.8" dy="15.1">华</tspan></text></g>
<g transform="rotate(227.15)"><path d="M0 0V196.3"/><text x="5.8" y="130.4"><tspan x="5.8" dy="0">钱</tspan><tspan x="5.8" dy="15.1">华</tspan></text></g>
<g transform="rotate(237.15)"><path d="M0 0V196.3"/><text x="5.8" y="130.4"><tspan x="5.8" dy="0">王</tspan><tspan x="5.8" dy="15.1">青</tspan></text></g>
<g transform="rotate(247.15)"><path d="M0 0V196.3"/><text x="5.8" y="130.4"><tspan x="5.8" dy="0">段</tspan><tspan x="5.8" dy="15.1">彩</tspan><tspan x="5.8" dy="15.1">霞</tspan></text></g>
<g transform="rotate(257.15)"><path d="M0 0V196.3"/><text x="5.8" y="130.4"><tspan x="5.8" dy="0">伍</tspan><tspan x="5.8" dy="15.1">娟</tspan></text></g>
<g transform="rotate(267.15)"><path d="M0 0V193.0"/><text x="5.8" y="127.1"><tspan x="5.8" dy="0">王</tspan><tspan x="5.8" dy="15.1">露</tspan></text></g>
<g transform="rotate(277.15)"><path d="M0 0V193.0"/><text x="5.8" y="127.1"><tspan x="5.8" dy="0">史</tspan><tspan x="5.8" dy="15.1">松</tspan><tspan x="5.8" dy="15.1">叶</tspan></text></g>
<g transform="rotate(287.15)"><path d="M0 0V193.0"/><text x="5.8" y="127.1"><tspan x="5.8" dy="0">孙</tspan><tspan x="5.8" dy="15.1">淑</tspan><tspan x="5.8" dy="15.1">丽</tspan></text></g>
<g transform="rotate(297.15)"><path d="M0 0V193.0"/><text x="5.8" y="127.1"><tspan x="5.8" dy="0">袁</tspan><tspan x="5.8" dy="15.1">琳</tspan></text></g>
<g transform="rotate(307.15)"><path d="M0 0V193.0"/><text x="5.8" y="127.1"><tspan x="5.8" dy="0">何</tspan><tspan x="5.8" dy="15.1">倩</tspan></text></g>
<g transform="rotate(317.15)"><path d="M0 0V193.0"/><text x="5.8" y="127.1"><tspan x="5.8" dy="0">陶</tspan><tspan x="5.8" dy="15.1">丽</tspan><tspan x="5.8" dy="15.1">燕</tspan></text></g>
<g transform="rotate(327.15)"><path d="M0 0V193.0"/><text x="5.8" y="127.1"><tspan x="5.8" dy="0">刘</tspan><tspan x="5.8" dy="15.1">丹</tspan></text></g>
<g transform="rotate(337.15)"><path d="M0 0V193.0"/><text x="5.8" y="127.1"><tspan x="5.8" dy="0">钱</tspan><tspan x="5.8" dy="15.1">华</tspan></text></g>
<g transform="rotate(347.15)"><path d="M0 0V193.0"/><text x="5.8" y="127.1"><tspan x="5.8" dy="0">雷</tspan><tspan x="5.8" dy="15.1">佳</tspan></text></g>
<path d="M1.2 -0.8L8 -7.5" stroke="#fff" stroke-width="1.6" stroke-linecap="round"/></g></svg>
<div class="a" style="left:776px;top:137px;width:16px;height:534px;background:linear-gradient(to right,#F0EFE8,#FDFDFB 25%,#FFFFFF 60%,#F4F3EC)"></div>
<div class="a scb" style="left:777px;top:139px;width:14px;height:15px"></div>
<svg style="left:0;top:0" width="1" height="1"><path d="M780.0 148.5 l4 -4 l4 4" fill="none" stroke="#27408B" stroke-width="2.2"/></svg>
<div class="a sct" style="left:777px;top:286px;width:14px;height:244px"></div>
<div class="a" style="left:781px;top:404px;width:6px;height:7px;background:repeating-linear-gradient(to bottom,#8FA8E8 0,#8FA8E8 1px,transparent 1px,transparent 2px)"></div>
<div class="a scb" style="left:777px;top:655px;width:14px;height:15px"></div>
<svg style="left:0;top:0" width="1" height="1"><path d="M780.0 660.5 l4 4 l4 -4" fill="none" stroke="#27408B" stroke-width="2.2"/></svg>
<div class="a" style="left:51px;top:671px;width:741px;height:18px;background:#ECE9D8;border-top:1px solid #9A988A"></div>
<svg style="left:54px;top:673px" width="10" height="13" viewBox="0 0 10 13"><path d="M0.500 0.500 h6 l3 3 v9 h-9z" fill="#fff" stroke="#222"/><path d="M2.500 7.500 h5 M5 5 v5" stroke="#222" stroke-width="1.200"/></svg>
<svg style="left:72px;top:674px" width="8" height="11" viewBox="0 0 8 11"><path d="M1 0 v11" stroke="#A8A69A" stroke-width="1.600"/><path d="M8 0 v11 l-5.500 -5.500z" fill="#A8A69A"/></svg>
<svg style="left:90px;top:674px" width="6" height="11" viewBox="0 0 6 11"><path d="M6 0 v11 l-5.500 -5.500z" fill="#A8A69A"/></svg>
<div class="t" style="left:119px;top:674px;font-size:12px;letter-spacing:1px">1 / 1</div>
<svg style="left:171px;top:674px" width="6" height="11" viewBox="0 0 6 11"><path d="M0 0 v11 l5.500 -5.500z" fill="#A8A69A"/></svg>
<svg style="left:186px;top:674px" width="8" height="11" viewBox="0 0 8 11"><path d="M7 0 v11" stroke="#A8A69A" stroke-width="1.600"/><path d="M0 0 v11 l5.500 -5.500z" fill="#A8A69A"/></svg>
<svg style="left:201px;top:673px" width="10" height="13" viewBox="0 0 10 13"><path d="M0.500 0.500 h6 l3 3 v9 h-9z" fill="#fff" stroke="#222"/><path d="M2.500 7.500 h5 M5 5 v5" stroke="#222" stroke-width="1.200"/></svg>
<svg style="left:216px;top:671px" width="56" height="18" viewBox="0 0 56 18"><path d="M0.500 0 V17.500 H54.500 V6 L48 0Z" fill="#fff" stroke="#B8B6A8"/></svg>
<div class="t" style="left:232px;top:673px;font-size:12px">页 1</div>
<div class="a grip" style="left:416px;top:674px;height:12px"></div>
<div class="a" style="left:423px;top:672px;width:352px;height:17px;background:linear-gradient(to bottom,#F0EFE8,#FDFDFB 25%,#FFFFFF 60%,#F4F3EC)"></div>
<div class="a scb" style="left:424px;top:673px;width:15px;height:15px"></div>
<svg style="left:0;top:0" width="1" height="1"><path d="M433.5 676.5 l-4 4 l4 4" fill="none" stroke="#27408B" stroke-width="2.2"/></svg>
<div class="a sct" style="left:483px;top:673px;width:273px;height:15px"></div>
<div class="a" style="left:615px;top:677px;width:8px;height:7px;background:repeating-linear-gradient(to right,#8FA8E8 0,#8FA8E8 1px,transparent 1px,transparent 2px)"></div>
<div class="a scb" style="left:759px;top:673px;width:15px;height:15px"></div>
<svg style="left:0;top:0" width="1" height="1"><path d="M764.5 676.5 l4 4 l-4 4" fill="none" stroke="#27408B" stroke-width="2.2"/></svg>
<svg style="left:777px;top:672px" width="15" height="15" viewBox="0 0 15 15"><circle cx="6" cy="6" r="4.800" fill="#fff" stroke="#444" stroke-width="1.300"/><circle cx="6" cy="6" r="2" fill="none" stroke="#444"/><path d="M9.500 9.500 L14 14" stroke="#222" stroke-width="2.200" stroke-linecap="round"/></svg>

<!-- sec_docker -->
<div class="a" style="left:792px;top:117px;width:212px;height:574px;background:#ECE9D8"></div>
<div class="a" style="left:794px;top:117px;width:2px;height:574px;border-left:1px solid #fff;border-right:1px solid #D8D4C4"></div>
<div class="a" style="left:795px;top:117px;width:209px;height:19px;background:#D8D5C5;border-bottom:1px solid #C5C2B2"></div>
<div class="t" style="left:801px;top:120px;font-size:12px">变换</div>
<svg style="left:947px;top:122px" width="11" height="9" viewBox="0 0 11 9"><path d="M1 0.500 L5 4.500 L1 8.500 M6 0.500 L10 4.500 L6 8.500" fill="none" stroke="#444" stroke-width="1.500"/></svg>
<svg style="left:967px;top:123px" width="10" height="7" viewBox="0 0 10 7"><path d="M0 6.500 L5 0.500 L10 6.500Z" fill="#555"/></svg>
<svg style="left:987px;top:122px" width="10" height="9" viewBox="0 0 10 9"><path d="M1 0.500 L9 8.500 M9 0.500 L1 8.500" stroke="#444" stroke-width="1.800"/></svg>
<div class="a" style="left:979px;top:137px;width:25px;height:554px;background:#ECE9D8;border-left:1px solid #D4D0C0"></div>
<div class="a" style="left:979px;top:140px;width:21px;height:72px;background:#ECE9D8;border:1px solid #C8C4B4;border-left:none;border-radius:0 5px 5px 0"></div>
<svg style="left:982px;top:146px" width="16" height="16" viewBox="0 0 16 16"><circle cx="9" cy="5" r="4.500" fill="#E8ECF4" stroke="#556"/><rect x="1.500" y="5.500" width="8" height="7" fill="#fff" stroke="#446"/><rect x="6.500" y="8.500" width="8" height="7" fill="#D8DCEC" stroke="#446"/></svg>
<div class="t vt" style="left:984px;top:165px;font-size:11px;color:#333">对象属性</div>
<div class="a" style="left:978px;top:212px;width:22px;height:74px;background:#FBFAF6;border:1px solid #E4E0D4;border-left:none;border-radius:0 5px 5px 0"></div>
<svg style="left:981px;top:217px" width="18" height="18" viewBox="0 0 18 18"><path d="M11.500 9.500 A4.500 4.500 0 1 1 7 5" fill="none" stroke="#445" stroke-width="1.600"/><path d="M9 8 l4 2 l-3.500 2z" fill="#445"/><path d="M13 0.500 V8 M9.500 4 H16.500 M13 0.500 l-1.500 1.800 M13 0.500 l1.500 1.800 M16.500 4 l-1.800 -1.500 M16.500 4 l-1.800 1.500" stroke="#223" stroke-width="1"/></svg>
<div class="t vt" style="left:984px;top:237px;font-size:11px;color:#000">变换</div>
<div class="a" style="left:984px;top:265px;width:14px;height:14px;background:linear-gradient(135deg,#F08C78,#E0503C 50%,#C83A28);border:1px solid #F4B4A4;border-radius:2px"></div>
<svg style="left:987px;top:268px" width="8" height="8" viewBox="0 0 8 8"><path d="M1 1 L7 7 M7 1 L1 7" stroke="#fff" stroke-width="2"/></svg>
<div class="a" style="left:814px;top:145px;width:22px;height:22px;border:1px solid #4A6A8A;border-radius:3px;background:#F6F5EE;box-shadow:inset 0 0 0 1px #fff"></div>
<div class="a" style="left:840px;top:145px;width:22px;height:22px;border:1px solid #4A6A8A;border-radius:3px;background:#E2DFD0;box-shadow:inset 0 0 0 1px #fff"></div>
<div class="a" style="left:865px;top:145px;width:22px;height:22px;border:1px solid #4A6A8A;border-radius:3px;background:#F6F5EE;box-shadow:inset 0 0 0 1px #fff"></div>
<div class="a" style="left:891px;top:145px;width:22px;height:22px;border:1px solid #4A6A8A;border-radius:3px;background:#F6F5EE;box-shadow:inset 0 0 0 1px #fff"></div>
<div class="a" style="left:916px;top:145px;width:22px;height:22px;border:1px solid #4A6A8A;border-radius:3px;background:#F6F5EE;box-shadow:inset 0 0 0 1px #fff"></div>
<svg style="left:818px;top:149px" width="14" height="14" viewBox="0 0 14 14"><path d="M5 0.500 h4 v4.500 h4.500 v4 h-4.500 v4.500 h-4 v-4.500 h-4.500 v-4 h4.500z" fill="#fff" stroke="#4A5A7A" stroke-width="1.100"/></svg>
<svg style="left:844px;top:149px" width="14" height="14" viewBox="0 0 14 14"><path d="M3 4 A5.500 5.500 0 1 1 2.500 10" fill="none" stroke="#556" stroke-width="1.500"/><path d="M0.500 1.500 l1 4.500 l4.500 -1z" fill="#556"/></svg>
<svg style="left:868px;top:148px" width="17" height="17" viewBox="0 0 17 17"><path d="M4 1.500 H11 L8 6.500 H1Z" fill="#fff" stroke="#667" stroke-width="1"/><path d="M1 6.500 H8 L11 11.500 L4 11.500Z" fill="#E4E4EC" stroke="#99A" stroke-width="0.800"/><path d="M14 2 V9 M12 7 l2 3 l2 -3z" stroke="#222" fill="#222" stroke-width="1"/></svg>
<svg style="left:894px;top:148px" width="17" height="17" viewBox="0 0 17 17"><rect x="1.500" y="1.500" width="13" height="13" fill="none" stroke="#555" stroke-dasharray="1 1.500"/><rect x="1.500" y="7.500" width="7" height="7" fill="#fff" stroke="#556"/><path d="M5 1 v4 M3.500 2.500 l1.500 -1.500 l1.500 1.500 M11 11 h4 M13.500 9.500 l1.500 1.500 l-1.500 1.500" fill="none" stroke="#222" stroke-width="1"/></svg>
<svg style="left:919px;top:149px" width="17" height="15" viewBox="0 0 17 15"><path d="M2 5.500 H9 L15 12.500 H8Z" fill="#E8E8F0" stroke="#445" stroke-width="1.100"/><path d="M4 2.500 H11 M4 2.500 l2 -1.500 M4 2.500 l2 1.500" stroke="#222" stroke-width="1" fill="none"/></svg>
<div class="a" style="left:813px;top:175px;width:143px;height:2px;border-top:1px solid #ACA899;border-bottom:1px solid #fff"></div>
<div class="t dl" style="left:813px;top:187px">旋转：</div>
<div class="t dl" style="left:813px;top:216px">角度：</div>
<div class="a" style="left:861px;top:213px;width:74px;height:22px;background:#ECE9D8;border:1px solid #8FA4B4;box-shadow:inset 0 0 0 1px #E2E6E2"></div>
<div class="t" style="left:864px;top:217px;font-size:10.5px;color:#ACA899">10.0</div>
<div class="a" style="left:916px;top:215px;width:17px;height:18px;background:#EEEDE2;border-radius:2px"></div>
<svg style="left:920px;top:218px" width="8" height="13" viewBox="0 0 8 13"><path d="M1 4.500 L4 1.500 L7 4.500" fill="none" stroke="#C9C7BA" stroke-width="1.600"/><path d="M1 8.500 L4 11.500 L7 8.500" fill="none" stroke="#C9C7BA" stroke-width="1.600"/></svg>
<div class="t" style="left:948px;top:216px;font-size:12px;color:#ACA899">度</div>
<div class="t dl" style="left:813px;top:245px">中心：</div>
<div class="t dl" style="left:822px;top:271px;color:#ACA899">水平：</div>
<div class="a" style="left:861px;top:266px;width:80px;height:22px;background:#ECE9D8;border:1px solid #8FA4B4;box-shadow:inset 0 0 0 1px #E2E6E2"></div>
<div class="t" style="left:864px;top:270px;font-size:10.5px;color:#ACA899">.0</div>
<div class="a" style="left:922px;top:268px;width:17px;height:18px;background:#EEEDE2;border-radius:2px"></div>
<svg style="left:926px;top:271px" width="8" height="13" viewBox="0 0 8 13"><path d="M1 4.500 L4 1.500 L7 4.500" fill="none" stroke="#C9C7BA" stroke-width="1.600"/><path d="M1 8.500 L4 11.500 L7 8.500" fill="none" stroke="#C9C7BA" stroke-width="1.600"/></svg>
<div class="t" style="left:947px;top:271px;font-size:11px;color:#ACA899">mm</div>
<div class="t dl" style="left:822px;top:299px;color:#ACA899">垂直：</div>
<div class="a" style="left:861px;top:294px;width:80px;height:22px;background:#ECE9D8;border:1px solid #8FA4B4;box-shadow:inset 0 0 0 1px #E2E6E2"></div>
<div class="t" style="left:864px;top:298px;font-size:10.5px;color:#ACA899">.0</div>
<div class="a" style="left:922px;top:296px;width:17px;height:18px;background:#EEEDE2;border-radius:2px"></div>
<svg style="left:926px;top:299px" width="8" height="13" viewBox="0 0 8 13"><path d="M1 4.500 L4 1.500 L7 4.500" fill="none" stroke="#C9C7BA" stroke-width="1.600"/><path d="M1 8.500 L4 11.500 L7 8.500" fill="none" stroke="#C9C7BA" stroke-width="1.600"/></svg>
<div class="t" style="left:947px;top:299px;font-size:11px;color:#ACA899">mm</div>
<div class="a" style="left:815px;top:331px;width:13px;height:13px;background:#fff;border:1px solid #C9C7BA"></div>
<div class="t" style="left:831px;top:332px;font-size:12px;color:#ACA899">相对中心</div>
<svg style="left:0;top:0" width="1024" height="768" viewBox="0 0 1024 768"><path d="M834 361H847M858 361H870M834 402H847M858 402H870M828 367V375M876 367V375M828 387V396M876 387V396" stroke="#D8D4C6" stroke-width="1"/><rect x="822.5" y="355.5" width="11" height="11" fill="#fff" stroke="#D4D0C2"/><rect x="822.5" y="375.5" width="11" height="11" fill="#fff" stroke="#D4D0C2"/><rect x="822.5" y="396.5" width="11" height="11" fill="#fff" stroke="#D4D0C2"/><rect x="846.5" y="355.5" width="11" height="11" fill="#fff" stroke="#D4D0C2"/><circle cx="852.500" cy="381.500" r="6" fill="none" stroke="#DAD7CA"/><rect x="846.5" y="396.5" width="11" height="11" fill="#fff" stroke="#D4D0C2"/><rect x="870.5" y="355.5" width="11" height="11" fill="#fff" stroke="#D4D0C2"/><rect x="870.5" y="375.5" width="11" height="11" fill="#fff" stroke="#D4D0C2"/><rect x="870.5" y="396.5" width="11" height="11" fill="#fff" stroke="#D4D0C2"/></svg>
<div class="a" style="left:914px;top:368px;width:29px;height:29px;background:linear-gradient(to bottom,#E8E8FA 0%,#B0ACDC 45%,#8C88C8 70%,#C8C6EC 100%);border:1px solid #8A88B8"></div>
<svg style="left:914px;top:360px" width="38" height="38" viewBox="0 0 38 38"><path d="M0.500 16.500 H29 M20.500 8.500 V37" stroke="#33336A" stroke-width="1"/><path d="M2.5 12.5h4M4.5 10.5v4M2.5 20.0h4M4.5 18.0v4M2.5 26.0h4M4.5 24.0v4M2.5 32.5h4M4.5 30.5v4M8.5 12.5h4M10.5 10.5v4M8.5 20.0h4M10.5 18.0v4M8.5 26.0h4M10.5 24.0v4M8.5 32.5h4M10.5 30.5v4M14.5 12.5h4M16.5 10.5v4M14.5 20.0h4M16.5 18.0v4M14.5 26.0h4M16.5 24.0v4M14.5 32.5h4M16.5 30.5v4M22.5 12.5h4M24.5 10.5v4M22.5 20.0h4M24.5 18.0v4M22.5 26.0h4M24.5 24.0v4M22.5 32.5h4M24.5 30.5v4" stroke="#4844A0" stroke-width="0.900" fill="none"/><path d="M23.500 5.500 C27 2.500 31.500 4 32 8" fill="none" stroke="#222" stroke-width="2.800"/><path d="M23.500 5.500 C27 2.500 31.500 4 32 8" fill="none" stroke="#fff" stroke-width="1.200"/><path d="M28.500 8 l3.500 4.500 l3 -5.500z" fill="#fff" stroke="#222" stroke-width="1"/></svg>
<div class="a" style="left:813px;top:420px;width:143px;height:2px;border-top:1px solid #ACA899;border-bottom:1px solid #fff"></div>
<div class="a" style="left:814px;top:430px;width:142px;height:20px;background:#F4F3EA;border:1px solid #C9C7BA;border-radius:3px"></div>
<div class="t" style="left:814px;top:434px;width:142px;text-align:center;font-size:12px;color:#ACA899">应用到再制</div>
<div class="a" style="left:814px;top:455px;width:142px;height:20px;background:#F4F3EA;border:1px solid #C9C7BA;border-radius:3px"></div>
<div class="t" style="left:814px;top:459px;width:142px;text-align:center;font-size:12px;color:#ACA899">应用</div>

<!-- sec_palette -->
<div class="a" style="left:1004px;top:117px;width:20px;height:574px;background:#ECE9D8"></div>
<div class="a" style="left:1008px;top:121px;width:13px;height:2px;border-top:2px dotted #B8B4A4"></div>
<div class="a" style="left:1007px;top:128px;width:13px;height:13px;border-radius:7px;background:#FDFDFB;border:1px solid #B4B2A6"></div>
<svg style="left:1011px;top:131px" width="5" height="7" viewBox="0 0 5 7"><path d="M0.500 0 V7 L5 3.500Z" fill="#000"/></svg>
<div class="a" style="left:1007px;top:144px;width:14px;height:14px;background:#F0EFE6;border-radius:2px"></div>
<svg style="left:1010px;top:148px" width="9" height="6" viewBox="0 0 9 6"><path d="M1 5 L4.500 1.500 L8 5" fill="none" stroke="#D4D2C6" stroke-width="1.800"/></svg>
<div class="a" style="left:1004px;top:160px;width:1px;height:494px;background:#6E6C64"></div>
<svg style="left:1005px;top:160px" width="18" height="17" viewBox="0 0 18 17"><rect x="0.500" y="0.500" width="17" height="16" fill="#fff" stroke="#222"/><path d="M0.500 0.500 L17.500 16.500 M17.500 0.500 L0.500 16.500" stroke="#222" stroke-width="1"/></svg>
<div class="a" style="left:1005px;top:177px;width:18px;height:18px;background:#ECE9D8"></div>
<div class="a" style="left:1007px;top:179px;width:14px;height:14px;background:#1E1C18"></div>
<div class="a" style="left:1005px;top:195px;width:17px;height:17px;background:#3A3834;border-bottom:1px solid rgba(0,0,0,0.28)"></div>
<div class="a" style="left:1005px;top:212px;width:17px;height:17px;background:#4E4C4A;border-bottom:1px solid rgba(0,0,0,0.28)"></div>
<div class="a" style="left:1005px;top:229px;width:17px;height:17px;background:#626060;border-bottom:1px solid rgba(0,0,0,0.28)"></div>
<div class="a" style="left:1005px;top:246px;width:17px;height:17px;background:#767474;border-bottom:1px solid rgba(0,0,0,0.28)"></div>
<div class="a" style="left:1005px;top:263px;width:17px;height:17px;background:#8A8A88;border-bottom:1px solid rgba(0,0,0,0.28)"></div>
<div class="a" style="left:1005px;top:280px;width:17px;height:17px;background:#9E9E9C;border-bottom:1px solid rgba(0,0,0,0.28)"></div>
<div class="a" style="left:1005px;top:297px;width:17px;height:17px;background:#B2B2B0;border-bottom:1px solid rgba(0,0,0,0.28)"></div>
<div class="a" style="left:1005px;top:314px;width:17px;height:17px;background:#C8C8C6;border-bottom:1px solid rgba(0,0,0,0.28)"></div>
<div class="a" style="left:1005px;top:331px;width:17px;height:17px;background:#DCDCDA;border-bottom:1px solid rgba(0,0,0,0.28)"></div>
<div class="a" style="left:1005px;top:348px;width:17px;height:17px;background:#FFFFFF;border-bottom:1px solid rgba(0,0,0,0.28)"></div>
<div class="a" style="left:1005px;top:365px;width:17px;height:17px;background:#2E1A78;border-bottom:1px solid rgba(0,0,0,0.28)"></div>
<div class="a" style="left:1005px;top:382px;width:17px;height:17px;background:#0A8CD8;border-bottom:1px solid rgba(0,0,0,0.28)"></div>
<div class="a" style="left:1005px;top:399px;width:17px;height:17px;background:#0A9650;border-bottom:1px solid rgba(0,0,0,0.28)"></div>
<div class="a" style="left:1005px;top:416px;width:17px;height:17px;background:#FFF000;border-bottom:1px solid rgba(0,0,0,0.28)"></div>
<div class="a" style="left:1005px;top:433px;width:17px;height:17px;background:#F04E14;border-bottom:1px solid rgba(0,0,0,0.28)"></div>
<div class="a" style="left:1005px;top:450px;width:17px;height:17px;background:#E8287C;border-bottom:1px solid rgba(0,0,0,0.28)"></div>
<div class="a" style="left:1005px;top:467px;width:17px;height:17px;background:#A03C78;border-bottom:1px solid rgba(0,0,0,0.28)"></div>
<div class="a" style="left:1005px;top:484px;width:17px;height:17px;background:#F08A14;border-bottom:1px solid rgba(0,0,0,0.28)"></div>
<div class="a" style="left:1005px;top:501px;width:17px;height:17px;background:#F8989A;border-bottom:1px solid rgba(0,0,0,0.28)"></div>
<div class="a" style="left:1005px;top:518px;width:17px;height:17px;background:#786860;border-bottom:1px solid rgba(0,0,0,0.28)"></div>
<div class="a" style="left:1005px;top:535px;width:17px;height:17px;background:#B4A8D8;border-bottom:1px solid rgba(0,0,0,0.28)"></div>
<div class="a" style="left:1005px;top:552px;width:17px;height:17px;background:#9080C0;border-bottom:1px solid rgba(0,0,0,0.28)"></div>
<div class="a" style="left:1005px;top:569px;width:17px;height:17px;background:#6478C0;border-bottom:1px solid rgba(0,0,0,0.28)"></div>
<div class="a" style="left:1005px;top:586px;width:17px;height:17px;background:#7050A8;border-bottom:1px solid rgba(0,0,0,0.28)"></div>
<div class="a" style="left:1005px;top:603px;width:17px;height:17px;background:#786C98;border-bottom:1px solid rgba(0,0,0,0.28)"></div>
<div class="a" style="left:1005px;top:620px;width:17px;height:17px;background:#485888;border-bottom:1px solid rgba(0,0,0,0.28)"></div>
<div class="a" style="left:1005px;top:637px;width:17px;height:17px;background:#504860;border-bottom:1px solid rgba(0,0,0,0.28)"></div>
<div class="a scb" style="left:1007px;top:655px;width:14px;height:15px"></div>
<svg style="left:0;top:0" width="1" height="1"><path d="M1010 661 l4 4 l4 -4" fill="none" stroke="#27408B" stroke-width="2.200"/></svg>
<svg style="left:1010px;top:675px" width="8" height="10" viewBox="0 0 8 10"><path d="M1 0 V10" stroke="#000" stroke-width="1.600"/><path d="M8 0 V10 L3 5Z" fill="#000"/></svg>

<!-- sec_status -->
<div class="a" style="left:0;top:689px;width:1024px;height:45px;background:#ECE9D8;border-top:1px solid #FBFAF5"></div>
<div class="t st num" style="left:4px;top:717px;letter-spacing:0.25px;-webkit-text-stroke:0">( 330.069, 68.380 )</div>
<div class="t st" style="left:120px;top:715px;letter-spacing:0">接着单击可进行拖动或缩放；再单击可旋转或倾斜；双击工具，可选择所有对象；按住 Shift 键单击可选择多个对象；按住 Alt 键单...</div>
<svg style="left:819px;top:693px" width="18" height="18" viewBox="0 0 18 18"><path d="M2 9 L8 3 L14 9 L8 15.500Z" fill="#fff" stroke="#444" stroke-width="1.200"/><path d="M3.200 9.500 H13 L8 15Z" fill="#E87818"/><path d="M8 3 C6.500 0.500 4.500 1.500 6 4.500" fill="none" stroke="#444" stroke-width="1.200"/><path d="M15.500 9 c1.500 2.500 1.500 4 0 4.500 c-1.500 -0.500 -1.500 -2 0 -4.500z" fill="#E87818"/></svg>
<svg style="left:840px;top:693px" width="19" height="18" viewBox="0 0 19 18"><rect x="0.500" y="0.500" width="17" height="16" fill="#fff" stroke="#222"/><path d="M0.500 0.500 L17.500 16.500 M17.500 0.500 L0.500 16.500" stroke="#222" stroke-width="1"/></svg>
<svg style="left:822px;top:714px" width="12" height="17" viewBox="0 0 12 17"><path d="M6 0.500 L9.500 6.500 C10.500 9.500 9 11 8.500 12 H3.500 C3 11 1.500 9.500 2.500 6.500Z" fill="#fff" stroke="#556" stroke-width="1.100"/><path d="M6 3.500 V8" stroke="#556"/><path d="M1.500 14.500 h9" stroke="#334" stroke-width="2"/></svg>
<div class="a" style="left:840px;top:713px;width:18px;height:17px;background:#1E1C18"></div>

<!-- sec_taskbar -->
<div class="a" id="taskbar" style="left:0;top:734px;width:1024px;height:34px;background:linear-gradient(to bottom,#3168D5 0%,#4993E6 3%,#3C84E8 9%,#2A6CDF 14%,#245EDB 22%,#2460DC 60%,#235BD4 85%,#1D4FBF 100%)"></div>
<div class="a" style="left:0;top:738px;width:96px;height:30px;border-radius:0 12px 12px 0/0 15px 15px 0;background:linear-gradient(to bottom,#2E8A2E 0%,#4CAE4A 8%,#3F9F3D 20%,#379536 50%,#2F8B2F 80%,#2A7E2A 100%);box-shadow:inset -2px 0 3px rgba(0,40,0,0.45), inset 0 2px 2px rgba(160,230,150,0.5)"></div>
<svg style="left:11px;top:743px" width="19" height="18" viewBox="0 0 19 18"><path d="M1 3 C3 1.500 6 1.500 8.500 3 L7.500 8.500 C5 7 2.500 7 0 8.500Z" fill="#E8502A"/><path d="M10 3.500 C12.500 5 15.500 5 18 3.500 L17 9 C14.500 10.500 11.500 10.500 9 9Z" fill="#6CBE3C"/><path d="M0 10 C2.500 8.500 5 8.500 7.500 10 L6.500 15.500 C4 14 1.500 14 -1 15.500Z" fill="#4C78E0"/><path d="M8.800 10.500 C11.300 12 14.300 12 16.800 10.500 L15.800 16 C13.300 17.500 10.300 17.500 7.800 16Z" fill="#F0C020"/></svg>
<div class="t" style="left:37px;top:742px;font-size:19px;color:#fff;font-style:italic;font-family:'Liberation Sans','Noto Sans CJK SC',sans-serif;font-weight:300;-webkit-text-stroke:0;transform:skewX(-14deg);text-shadow:1px 1px 0 rgba(0,40,0,0.55)">开始</div>
<div class="a" style="left:105px;top:744px;width:6px;height:20px;background-image:radial-gradient(circle at 1.5px 1.5px,#1941A5 1.1px,transparent 1.4px);background-size:3px 4px"></div>
<svg style="left:119px;top:744px" width="18" height="18" viewBox="0 0 18 18"><circle cx="9" cy="9.500" r="6.500" fill="none" stroke="#3CA0F0" stroke-width="3"/><path d="M3 10 h12" stroke="#3CA0F0" stroke-width="2.500"/><path d="M1 14 C4 4 13 0 17 2" fill="none" stroke="#F0C030" stroke-width="1.800"/></svg>
<svg style="left:143px;top:745px" width="17" height="17" viewBox="0 0 17 17"><circle cx="8" cy="9" r="7.500" fill="#DCE8FA" stroke="#4A7AD0" stroke-width="1"/><rect x="4" y="5" width="8" height="8" fill="#2A5AC0"/><path d="M6 7 h4 M6 9 h4 M6 11 h3" stroke="#fff"/><path d="M12 1 l3 3 l-2 2z" fill="#222"/></svg>
<svg style="left:165px;top:745px" width="17" height="17" viewBox="0 0 17 17"><rect x="0.500" y="2.500" width="16" height="14" fill="#0A4A8A" stroke="#052A5A"/><path d="M6 2 C10 0 14 3 13 8 C12 13 8 16 5 16 V8z" fill="#1AA0E0"/><path d="M1 3 h5 v13 h-5z" fill="#111"/></svg>
<svg style="left:188px;top:745px" width="17" height="17" viewBox="0 0 17 17"><rect x="0" y="0" width="17" height="17" fill="#D82828"/><path d="M2 9 L7 14 L16 2 L16 8 L8 16 L2 12Z" fill="#fff"/><path d="M0 0 h8 l-8 8z" fill="#F06060"/></svg>
<svg style="left:213px;top:746px" width="17" height="17" viewBox="0 0 17 17"><circle cx="8" cy="7.500" r="6" fill="none" stroke="#3C8CF0" stroke-width="2"/><path d="M11 12 l3.500 3.500" stroke="#3C8CF0" stroke-width="2.200"/></svg>
<svg style="left:254px;top:743px" width="9" height="7" viewBox="0 0 9 7"><path d="M0.500 0.500 L3.500 3.500 L0.500 6.500 M5 0.500 L8 3.500 L5 6.500" fill="none" stroke="#C8DCFA" stroke-width="1.300"/></svg>
<div class="a" style="left:270px;top:744px;width:6px;height:20px;background-image:radial-gradient(circle at 1.5px 1.5px,#1941A5 1.1px,transparent 1.4px);background-size:3px 4px"></div>
<div class="a" style="left:281px;top:741px;width:159px;height:25px;border-radius:3px;background:linear-gradient(to bottom,#5A9CF8 0%,#3C81F0 12%,#3A7EEE 75%,#3272E0 100%);border:1px solid #2A62C8"></div>
<svg style="left:290px;top:744px" width="17" height="17" viewBox="0 0 17 17"><circle cx="8.500" cy="9" r="6" fill="#7CC0F8" stroke="#2A80D8" stroke-width="2.400"/><path d="M3 9.500 h11" stroke="#2A80D8" stroke-width="2.200"/><path d="M1 13 C4 4 12 1 16 2.500" fill="none" stroke="#F0D060" stroke-width="1.500"/></svg>
<div class="t tk" style="left:309px;top:748px;color:#F4E4B8;font-weight:bold">17</div>
<div class="t tk" style="left:326px;top:748px">Internet Exp...</div>
<svg style="left:430px;top:752px" width="7" height="4" viewBox="0 0 7 4"><path d="M0 0 h7 l-3.500 4z" fill="#fff"/></svg>
<div class="a" style="left:442px;top:741px;width:157px;height:25px;border-radius:3px;background:linear-gradient(to bottom,#5A9CF8 0%,#3C81F0 12%,#3A7EEE 75%,#3272E0 100%);border:1px solid #2A62C8"></div>
<svg style="left:450px;top:745px" width="16" height="14" viewBox="0 0 16 14"><path d="M0.500 2.500 h5 l1.500 2 h8.500 v9 h-15z" fill="#F4D060" stroke="#A07810"/><path d="M0.500 5.500 h15" stroke="#FBEFA8"/></svg>
<div class="t tk" style="left:469px;top:748px;color:#F4E4B8;font-weight:bold">5</div>
<div class="t tk" style="left:479px;top:748px">Windows Explorer</div>
<svg style="left:589px;top:752px" width="7" height="4" viewBox="0 0 7 4"><path d="M0 0 h7 l-3.500 4z" fill="#fff"/></svg>
<div class="a" style="left:600px;top:741px;width:160px;height:25px;border-radius:3px;background:linear-gradient(to bottom,#1A48A8 0%,#1E52B7 15%,#1F55BC 80%,#2258C0 100%);border:1px solid #173F96"></div>
<svg style="left:611px;top:745px" width="16" height="16" viewBox="0 0 16 16"><rect x="0" y="0" width="16" height="16" fill="#8CC63F"/><path d="M1 1 L9 2 L13 8 L8 9 L5 6 Z" fill="#fff"/><path d="M8 9 L15 15 L11 15 L6 11Z" fill="#2A4A14"/></svg>
<div class="t tk" style="left:630px;top:748px">CorelDRAW X4 ( ...</div>
<div class="a" style="left:786px;top:744px;width:6px;height:20px;background-image:radial-gradient(circle at 1.5px 1.5px,#1941A5 1.1px,transparent 1.4px);background-size:3px 4px"></div>
<svg style="left:799px;top:745px" width="16" height="16" viewBox="0 0 16 16"><rect x="0.500" y="0.500" width="15" height="15" fill="#fff" stroke="#C01818" stroke-width="1.600"/><rect x="2" y="2" width="12" height="12" fill="#D82020"/><path d="M4 5 h3 M5.500 3 v10 M4 9 l3 -2 M9 4 h4 v4 h-4z M9 10 l2 3 l2 -3" stroke="#fff" stroke-width="1.200" fill="none"/></svg>
<svg style="left:822px;top:746px" width="14" height="16" viewBox="0 0 14 16"><path d="M0.500 0.500 h13 v12 h-8 l-3 3 v-3 h-2z" fill="#FBF4C0" stroke="#222"/><path d="M5 4.500 C5 2 9.500 2 9.500 4.500 C9.500 6.500 7.200 6.500 7.200 8.500 M7.200 10 v1.500" fill="none" stroke="#000" stroke-width="1.700"/></svg>
<svg style="left:847px;top:744px" width="10" height="8" viewBox="0 0 10 8"><path d="M3.500 0.500 h6 v4 h-2 M3.500 1.500 h6" fill="none" stroke="#fff" stroke-width="1"/><rect x="0.500" y="3" width="6" height="4.500" fill="none" stroke="#fff"/></svg>
<svg style="left:848px;top:757px" width="7" height="4" viewBox="0 0 7 4"><path d="M0 0 h7 l-3.500 4z" fill="#fff"/></svg>
<div class="a" style="left:893px;top:736px;width:131px;height:32px;background:linear-gradient(to bottom,#0C5AC0 0%,#1C9CF0 6%,#18A0F4 14%,#1290E8 28%,#0F86E0 70%,#0E7AD2 100%);border-left:1px solid #0A3C90"></div>
<div class="a" style="left:885px;top:746px;width:17px;height:17px;border-radius:9px;background:radial-gradient(circle at 35% 30%,#8CC8FA,#2A80E0 60%,#1A60C8);box-shadow:0 0 1px #0A3C90"></div>
<svg style="left:890px;top:750px" width="7" height="9" viewBox="0 0 7 9"><path d="M5.500 1 L1.500 4.500 L5.500 8" fill="none" stroke="#fff" stroke-width="2"/></svg>
<svg style="left:904px;top:745px" width="17" height="17" viewBox="0 0 17 17"><circle cx="8.500" cy="8.500" r="8" fill="#0A14C8" stroke="#C8D8FA" stroke-width="0.800"/><path d="M10 2 C15 5 15 12 10 15 C12 11 12 6 10 2Z" fill="#fff"/></svg>
<svg style="left:922px;top:746px" width="15" height="15" viewBox="0 0 15 15"><circle cx="7.500" cy="7.500" r="7" fill="#F8C820" stroke="#C08010" stroke-width="0.800"/><path d="M3 8 C5 12 10 12 12 8Z" fill="#D03018"/></svg>
<svg style="left:939px;top:744px" width="17" height="18" viewBox="0 0 17 18"><rect x="5.500" y="0.500" width="10" height="9" fill="#7CA8E8" stroke="#334"/><rect x="0.500" y="5.500" width="10" height="8" fill="#A8C8F4" stroke="#334"/><path d="M3 16.500 h8" stroke="#C8C8C8" stroke-width="2"/></svg>
<svg style="left:958px;top:745px" width="17" height="18" viewBox="0 0 17 18"><circle cx="7" cy="7" r="6" fill="#8A8A8A" stroke="#444"/><circle cx="7" cy="7" r="3" fill="#444"/><path d="M11 12 l4 4" stroke="#A8C8F4" stroke-width="2.500"/></svg>
<div class="t" style="left:980px;top:747px;font-size:11px;color:#fff;letter-spacing:0.7px;-webkit-text-stroke:0">15:53</div>

</div>
</body></html>
